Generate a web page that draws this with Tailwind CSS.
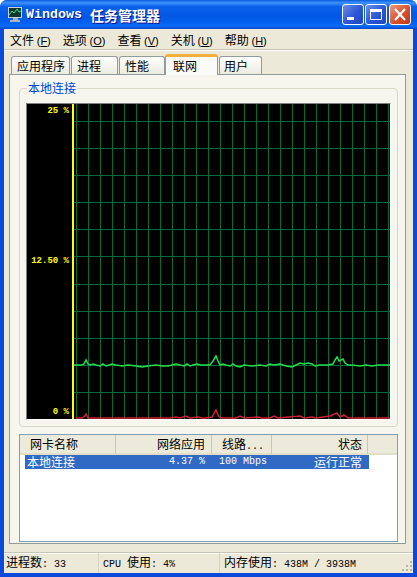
<!DOCTYPE html>
<html lang="en">
  <head>
    <meta charset="UTF-8" />
    <title>Windows 任务管理器</title>
    <script src="https://cdn.jsdelivr.net/npm/@tailwindcss/browser@4"></script>
  </head>
  <body class="bg-white">
    <div class="w-[417px] h-[577px] flex flex-col overflow-hidden rounded-t-[7px] bg-[#0a49d9] text-[12px] leading-[14px] text-black font-['Noto_Sans_CJK_SC','Liberation_Sans',sans-serif]">
      <!-- title bar -->
      <div class="h-[29px] shrink-0 flex items-center pl-[6px] pr-[6px] bg-[linear-gradient(180deg,#0a5ce0_0%,#3f93fb_10%,#0a62ea_22%,#0257e6_55%,#0362f0_80%,#0a6cf6_90%,#0346c8_100%)]">
        <svg class="w-[17px] h-[17px] shrink-0" viewBox="0 0 17 17">
          <rect x="2" y="1" width="14" height="11" fill="#c8d4dc" />
          <rect x="3" y="2" width="12" height="9" fill="#10382c" />
          <path d="M3 9l3-4 2 2 3-4 2 3 2-1" fill="none" stroke="#3de07a" />
          <path d="M7 12h5v2h2v2H4v-2h3z" fill="#a9b6c0" />
        </svg>
        <div class="flex items-center ml-[3px] font-bold text-white [text-shadow:1px_1px_0_#0f1089]">
          <span class="w-[64px] text-[13.33px] font-['Liberation_Mono',monospace]">Windows</span>
          <span class="text-[14px]">任务管理器</span>
        </div>
        <div class="ml-auto flex gap-[1px]">
          <button class="w-[22px] h-[21px] rounded-[3px] border border-white bg-[linear-gradient(135deg,#6f8fe8,#2a55d6_55%,#2145c0)]">
            <svg class="w-[20px] h-[19px]" viewBox="0 0 20 19"><rect x="4" y="12" width="7" height="3" fill="#fff" /></svg>
          </button>
          <button class="w-[22px] h-[21px] rounded-[3px] border border-white bg-[linear-gradient(135deg,#6f8fe8,#2a55d6_55%,#2145c0)]">
            <svg class="w-[20px] h-[19px]" viewBox="0 0 20 19"><path d="M4.5 4.5h11v10h-11z" fill="none" stroke="#fff" /><rect x="4" y="4" width="12" height="3" fill="#fff" /></svg>
          </button>
          <button class="w-[22px] h-[21px] ml-[1px] rounded-[3px] border border-white bg-[linear-gradient(135deg,#eb9a7e,#d9512c_55%,#bb3a18)]">
            <svg class="w-[20px] h-[19px]" viewBox="0 0 20 19"><path d="M5 4l10 11M15 4L5 15" stroke="#fff" stroke-width="2.2" fill="none" /></svg>
          </button>
        </div>
      </div>

      <div class="flex-1 mx-[4px] mb-[4px] flex flex-col bg-[#ece9d8]">
        <!-- menu -->
        <div class="h-[22px] shrink-0 flex items-center pl-[6px] pt-[1px] gap-[12px] border-b border-b-white shadow-[inset_0_-1px_0_#c8c5b4]">
          <span>文件 <span class="text-[11px] font-['Liberation_Sans',sans-serif]">(<u>F</u>)</span></span>
          <span>选项 <span class="text-[11px] font-['Liberation_Sans',sans-serif]">(<u>O</u>)</span></span>
          <span>查看 <span class="text-[11px] font-['Liberation_Sans',sans-serif]">(<u>V</u>)</span></span>
          <span>关机 <span class="text-[11px] font-['Liberation_Sans',sans-serif]">(<u>U</u>)</span></span>
          <span>帮助 <span class="text-[11px] font-['Liberation_Sans',sans-serif]">(<u>H</u>)</span></span>
        </div>

        <!-- tabs -->
        <div class="h-[20px] mt-[3px] shrink-0 flex items-end pl-[7px] gap-[1px] relative z-10">
          <div class="w-[59px] h-[18px] pl-[5px] pt-[2px] rounded-t-[3px] border border-b-0 border-[#919b9c] bg-[linear-gradient(180deg,#fff,#ecebe0)]">应用程序</div>
          <div class="w-[47px] h-[18px] pl-[5px] pt-[2px] rounded-t-[3px] border border-b-0 border-[#919b9c] bg-[linear-gradient(180deg,#fff,#ecebe0)]">进程</div>
          <div class="w-[46px] h-[18px] pl-[5px] pt-[2px] rounded-t-[3px] border border-b-0 border-[#919b9c] bg-[linear-gradient(180deg,#fff,#ecebe0)]">性能</div>
          <div class="w-[53px] h-[21px] -mb-[1px] -mx-[1px] pl-[7px] pt-[2px] rounded-t-[3px] border border-b-0 border-[#919b9c] border-t-[3px] border-t-[#f0b040] bg-[#fafaf6]">联网</div>
          <div class="w-[43px] h-[18px] ml-[1px] pl-[4px] pt-[2px] rounded-t-[3px] border border-b-0 border-[#919b9c] bg-[linear-gradient(180deg,#fff,#ecebe0)]">用户</div>
        </div>

        <!-- tab page -->
        <div class="w-[397px] h-[470px] ml-[5px] shrink-0 flex flex-col border border-[#919b9c] bg-[#f6f5ee] pl-[9px] pt-[13px]">
          <div class="relative w-[379px] h-[339px] shrink-0 pl-[6px] pt-[14px] rounded-[4px] border border-[#d8d6c6]">
            <span class="absolute -top-[8px] left-[7px] px-[1px] bg-[#f6f5ee] text-[#0046d5]">本地连接</span>
            <div class="w-[365px] h-[317px] flex border border-[#808080] border-r-white border-b-white bg-black">
              <div class="w-[47px] shrink-0 flex flex-col justify-between items-end pr-[3px] h-[315px] border-r-2 border-r-[#ffff00] text-[9px] font-bold text-[#ffff00] font-['Liberation_Mono',monospace]">
                <span>25 %</span>
                <span class="-mt-[2px]">12.50 %</span>
                <span>0 %</span>
              </div>
              <svg class="w-[316px] h-[315px] shrink-0" viewBox="74 104 316 315" shape-rendering="crispEdges">
                <path d="M76.5 104v315m12-315v315m12-315v315m12-315v315m12-315v315m12-315v315m12-315v315m12-315v315m12-315v315m12-315v315m12-315v315m12-315v315m12-315v315m12-315v315m12-315v315m12-315v315m12-315v315m12-315v315m12-315v315m12-315v315m12-315v315m12-315v315m12-315v315m12-315v315m12-315v315m12-315v315m12-315v315" fill="none" stroke="#006c3a" />
                <path d="M74 121.5h316M74 148.5h316M74 175.5h316M74 202.5h316M74 229.5h316M74 256.5h316M74 284.5h316M74 311.5h316M74 338.5h316M74 365.5h316M74 392.5h316" fill="none" stroke="#006c3a" />
                <polyline shape-rendering="auto" fill="none" stroke="#22dc4c" stroke-width="1.5" points="74,365 82,365 84,364 86,360 88,364 90,365 93,364 96,365 100,366 103,364 106,366 109,365 112,364 116,365 122,366 128,365 136,366 142,367 148,366 156,365 162,366 168,366 172,365 176,364 180,365 184,366 187,364 190,366 193,365 197,364 201,365 206,365 210,365 213,361 216,356 218,361 220,365 223,364 226,365 230,366 233,364 236,366 240,367 244,365 252,366 260,365 266,366 270,364 274,365 280,364 286,366 292,367 296,365 300,363 304,364 308,363 312,364 315,366 320,365 328,365 333,364 335,360 337,357 339,361 341,360 343,359 345,363 348,365 352,365 360,366 366,365 372,366 378,365 390,365" />
                <polyline shape-rendering="auto" fill="none" stroke="#d02034" stroke-width="1.5" points="76,418 82,418 84,417 86,414 88,418 92,418 110,418 146,418 166,418 170,418 176,417 180,418 186,416 190,418 198,417 202,418 206,418 212,417 216,410 219,417 222,418 236,418 240,416 244,418 258,417 262,418 270,418 274,416 278,418 300,416 304,418 312,417 316,418 330,416 337,413 340,417 344,415 348,418 356,418 390,418" />
              </svg>
            </div>
          </div>

          <!-- adapter list -->
          <div class="w-[379px] h-[108px] mt-[7px] shrink-0 border border-[#7f9db9] bg-white">
            <div class="h-[20px] grid grid-cols-[96px_96px_60px_96px] bg-[#ebeadb] border-b-2 border-b-[#e2dfcb]">
              <div class="pl-[10px] pt-[2px] mb-[2px] border-r border-r-[#c9c6b4]">网卡名称</div>
              <div class="pr-[6px] pt-[2px] mb-[2px] text-right border-r border-r-[#c9c6b4]">网络应用</div>
              <div class="pl-[10px] pt-[2px] mb-[2px] border-r border-r-[#c9c6b4]">线路<span class="text-[10px] font-['Liberation_Mono',monospace]">...</span></div>
              <div class="pr-[5px] pt-[2px] mb-[2px] text-right border-r border-r-[#c9c6b4]">状态</div>
            </div>
            <div class="pl-[5px]">
              <div class="w-[344px] h-[14px] grid grid-cols-[91px_96px_60px_97px] items-center bg-[#316ac5] text-white">
                <div class="pl-[2px]">本地连接</div>
                <div class="pr-[7px] text-right text-[10px] font-['Liberation_Mono',monospace]">4.37 %</div>
                <div class="pl-[7px] text-[10px] font-['Liberation_Mono',monospace]">100 Mbps</div>
                <div class="pr-[7px] text-right">运行正常</div>
              </div>
            </div>
          </div>
        </div>

        <!-- status bar -->
        <div class="h-[21px] mt-[8px] shrink-0 flex items-center border-t border-t-[#c8c5b4] shadow-[inset_0_1px_0_#fff]">
          <div class="w-[95px] h-full pl-[2px] pt-[2px] border-r border-r-[#d6d3c2]">进程数<span class="text-[10px] font-['Liberation_Mono',monospace]">: 33</span></div>
          <div class="w-[121px] h-full pl-[4px] pt-[2px] border-r border-r-[#d6d3c2]"><span class="text-[10px] font-['Liberation_Mono',monospace]">CPU </span>使用<span class="text-[10px] font-['Liberation_Mono',monospace]">: 4%</span></div>
          <div class="pl-[4px] pt-[2px] h-full">内存使用<span class="text-[10px] font-['Liberation_Mono',monospace]">: 438M / 3938M</span></div>
          <svg class="ml-auto mt-[6px] w-[12px] h-[12px]" viewBox="0 0 12 12">
            <path d="M9 1h2v2H9zM5 5h2v2H5zM9 5h2v2H9zM1 9h2v2H1zM5 9h2v2H5zM9 9h2v2H9z" fill="#b8b5a4" />
          </svg>
        </div>
      </div>
    </div>
  </body>
</html>
